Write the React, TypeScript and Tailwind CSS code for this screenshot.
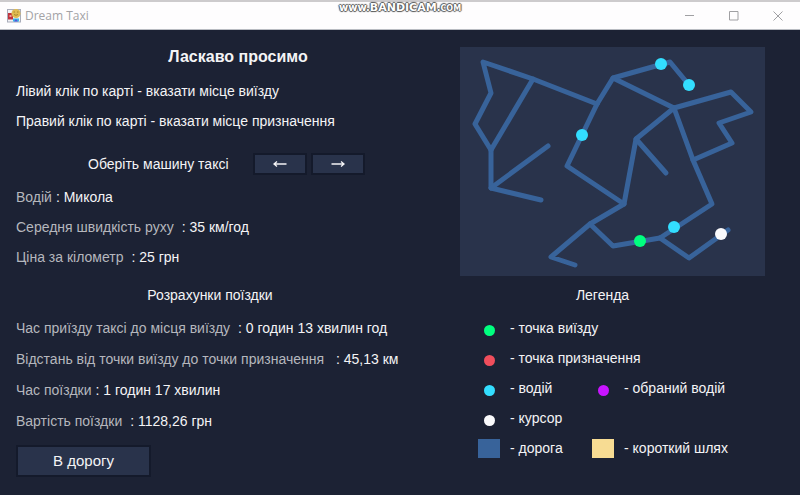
import clsx from 'clsx';
import { memo } from 'react';

interface InfoRowProps {
  label: string;
  value: string;
  gap?: string;
}

const driverInfo: InfoRowProps[] = [
  { label: 'Водій', value: 'Микола', gap: 'gap-1' },
  { label: 'Середня швидкість руху', value: '35 км/год' },
  { label: 'Ціна за кілометр', value: '25 грн' },
];

const tripInfo: InfoRowProps[] = [
  { label: 'Час приїзду таксі до місця виїзду', value: '0 годин 13 хвилин год' },
  { label: 'Відстань від точки виїзду до точки призначення', value: '45,13 км', gap: 'gap-3' },
  { label: 'Час поїздки', value: '1 годин 17 хвилин', gap: 'gap-1' },
  { label: 'Вартість поїздки', value: '1128,26 грн' },
];

const roads = [
  '137,57 73,32 23,15 31,46 15,77 31,103 31,141 81,153',
  '73,32 31,103',
  '31,141 88,99',
  '137,57 153,31 210,15 229,38',
  '137,57 107,119 164,157 130,177 91,210 115,218',
  '153,31 214,61 271,45 291,65 259,76 272,96 233,113',
  '214,61 233,113 252,157 200,191 153,199 130,177',
  '214,61 176,92 164,157',
  '176,92 206,126',
  '200,191 229,211 268,183',
];

const points = [
  { x: 201, y: 17, color: '#33deff' },
  { x: 229, y: 38, color: '#33deff' },
  { x: 122, y: 88, color: '#33deff' },
  { x: 214, y: 180, color: '#33deff' },
  { x: 180, y: 194, color: '#00ff7f' },
  { x: 261, y: 187, color: '#fafafc' },
];

const legend = [
  { text: 'точка виїзду', color: 'bg-[#00ff7f]', wide: true },
  { text: 'точка призначення', color: 'bg-[#f04e5c]', wide: true },
  { text: 'водій', color: 'bg-[#33deff]' },
  { text: 'обраний водій', color: 'bg-[#c814ff]' },
  { text: 'курсор', color: 'bg-[#fafafc]', wide: true },
  { text: 'дорога', color: 'bg-[#38639a]', square: true },
  { text: 'короткий шлях', color: 'bg-[#f7dc93]', square: true },
];

const InfoRow = ({ label, value, gap = 'gap-2' }: InfoRowProps) => (
  <div className={clsx('flex', gap)}>
    <dt className="text-[#b5b7bd]">{label}</dt>
    <dd>: {value}</dd>
  </div>
);

const AppIcon = () => (
  <svg viewBox="0 0 14 14" className="h-3.5 w-3.5" aria-hidden="true">
    <rect x="0.5" y="0.5" width="13" height="12.5" fill="#f2f2f6" stroke="#a9adba" />
    <rect x="1" y="4" width="5" height="6.5" fill="#c0323c" />
    <rect x="2.5" y="6" width="2" height="2" fill="#f0a0a0" />
    <circle cx="9" cy="4.5" r="4.5" fill="#dfbb52" />
    <path d="M6.5 3h1.5M10 3h1.5M7 5.5q2 1.6 4 0" stroke="#a8862f" fill="none" />
    <rect x="6" y="9.5" width="6" height="3" fill="#39b8e8" />
    <path d="M7 12.5l2-2.5 2 2.5z" fill="#5a50d8" />
  </svg>
);

const TitleBar = () => (
  <header className="relative flex h-[30px] items-center border-t-2 border-b border-t-[#cdcbcd] border-b-[#b9bcc2] bg-[#fefdfe] pl-[7px]">
    <AppIcon />
    <span className="ml-1 flex-1 font-['Open_Sans',sans-serif] text-xs text-[#a3a3a6]">Dream Taxi</span>
    <button type="button" aria-label="Згорнути" className="flex h-full w-11 items-center justify-center">
      <svg viewBox="0 0 10 10" className="h-2.5 w-2.5" stroke="#a0a0a3">
        <path d="M0 4.5h9" />
      </svg>
    </button>
    <button type="button" aria-label="Розгорнути" className="flex h-full w-11 items-center justify-center">
      <svg viewBox="0 0 10 10" className="h-2.5 w-2.5" stroke="#a0a0a3" fill="none">
        <path d="M0.5 0.5h8.5v8.5h-8.5z" />
      </svg>
    </button>
    <button type="button" aria-label="Закрити" className="flex h-full w-11 items-center justify-center">
      <svg viewBox="0 0 10 10" className="h-2.5 w-2.5" stroke="#a0a0a3">
        <path d="M0.5 0.5l9 9M9.5 0.5l-9 9" />
      </svg>
    </button>
    <div className="pointer-events-none absolute inset-x-0 top-0 flex items-baseline justify-center font-['DejaVu_Sans',sans-serif] text-[10px] leading-3 font-bold text-white [text-shadow:1px_0_1px_#555,-1px_0_1px_#555,0_1px_1px_#555,0_-1px_1px_#555]">
      <span>www.</span>
      <span className="text-[11px]">BANDICAM</span>
      <span>.</span>
      <span className="text-[8px]">COM</span>
    </div>
  </header>
);

const CityMap = () => (
  <svg viewBox="0 0 305 229" className="block w-full bg-[#29334b]" role="img" aria-label="Карта">
    <g fill="none" stroke="#38639a" strokeWidth="5" strokeLinecap="round" strokeLinejoin="round">
      {roads.map((road) => (
        <polyline key={road} points={road} />
      ))}
    </g>
    {points.map(({ x, y, color }) => (
      <circle key={`${x}-${y}`} cx={x} cy={y} r="6" fill={color} />
    ))}
  </svg>
);

const Legend = () => (
  <ul className="mt-[13px] grid grid-cols-[114px_1fr] gap-y-2.5 pl-[18px]">
    {legend.map(({ text, color, wide, square }) => (
      <li key={text} className={clsx('flex items-center gap-2.5', wide && 'col-span-2')}>
        <span className="flex w-[22px] justify-center">
          <span className={clsx(color, square ? 'h-[19px] w-full' : 'mt-1 h-[11px] w-[11px] rounded-full')} />
        </span>
        <span>- {text}</span>
      </li>
    ))}
  </ul>
);

const navButton =
  'flex h-[22px] w-[54px] items-center justify-center border-2 border-[#141a2b] bg-[#29334b]';

const App = () => (
  <div className="flex min-h-screen flex-col bg-[#1c2234] font-['Liberation_Sans',Arial,sans-serif] text-sm leading-5 text-[#f4f4f6]">
    <TitleBar />
    <main className="flex flex-1 pt-[17px] pr-[35px] pb-4 pl-4">
      <section className="flex-1">
        <h1 className="text-center text-base leading-5 font-bold">Ласкаво просимо</h1>
        <div className="mt-3.5 flex flex-col gap-2.5">
          <p>Лівий клік по карті - вказати місце виїзду</p>
          <p>Правий клік по карті - вказати місце призначення</p>
        </div>

        <div className="mt-[22px] flex items-center pl-[72px]">
          <h2>Оберіть машину таксі</h2>
          <div className="ml-6 flex gap-1">
            <button type="button" aria-label="Попередня машина" className={navButton}>
              <svg viewBox="0 0 14 8" className="h-2 w-3.5" fill="none" stroke="#f4f4f6">
                <path d="M1 4h12.5M4 1.5L1 4l3 2.5" strokeWidth="1.3" />
              </svg>
            </button>
            <button type="button" aria-label="Наступна машина" className={navButton}>
              <svg viewBox="0 0 14 8" className="h-2 w-3.5" fill="none" stroke="#f4f4f6">
                <path d="M0.5 4H13M10 1.5L13 4l-3 2.5" strokeWidth="1.3" />
              </svg>
            </button>
          </div>
        </div>
        <dl className="mt-3 flex flex-col gap-2.5">
          {driverInfo.map((row) => (
            <InfoRow key={row.label} {...row} />
          ))}
        </dl>

        <h2 className="mt-[18px] pr-14 text-center">Розрахунки поїздки</h2>
        <dl className="mt-[13px] flex flex-col gap-[11px]">
          {tripInfo.map((row) => (
            <InfoRow key={row.label} {...row} />
          ))}
        </dl>
        <button
          type="button"
          className="mt-3.5 h-8 w-[135px] border-2 border-[#141a2b] bg-[#29334b] text-[15px] leading-5"
        >
          В дорогу
        </button>
      </section>

      <section className="w-[41%] max-w-[305px]">
        <CityMap />
        <h2 className="mt-[9px] pr-5 text-center">Легенда</h2>
        <Legend />
      </section>
    </main>
  </div>
);

export default memo(App);
